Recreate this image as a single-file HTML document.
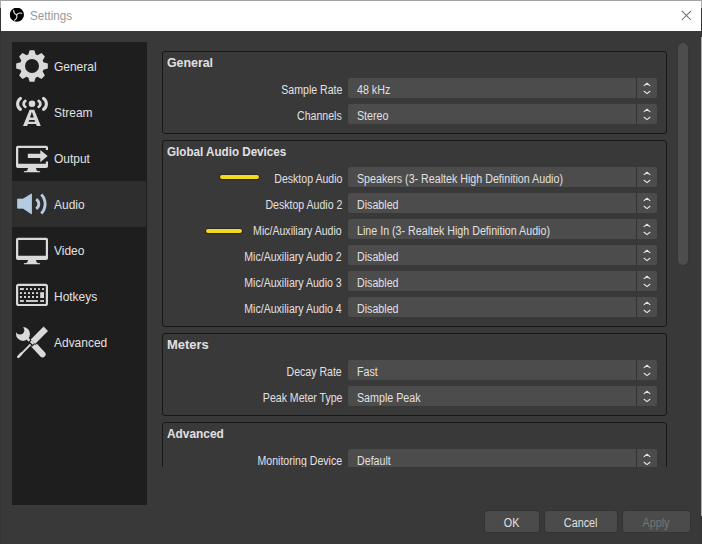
<!DOCTYPE html>
<html><head><meta charset="utf-8">
<style>
*{margin:0;padding:0;box-sizing:border-box;}
html,body{width:702px;height:544px;overflow:hidden;background:#3a393a;}
body{position:relative;font-family:"Liberation Sans",sans-serif;font-size:12px;color:#e1e0e1;}
.abs{position:absolute;}
#bt{left:0;top:0;width:702px;height:1px;background:#a2a2a2;}
#bl{left:0;top:0;width:1px;height:544px;background:#343434;}
#bl2{left:0;top:0;width:1px;height:8px;background:#aaaaaa;}
#br{left:701px;top:0;width:1px;height:544px;background:#343434;}
#br2{left:701px;top:0;width:1px;height:8px;background:#aaaaaa;}
#br3{left:701px;top:37px;width:1px;height:479px;background:#b0b0b0;}
#title{left:1px;top:1px;width:700px;height:30px;background:#fff;}
#title .t{position:absolute;left:29px;top:8px;color:#989898;font-size:12px;transform:scaleX(0.97);transform-origin:0 50%;}
#side{left:12px;top:42px;width:135px;height:463px;background:#1f1e1f;}
.item{position:absolute;left:0;width:135px;height:46px;}
.item.sel{background:#2f2e2f;width:134px;}
.item svg{position:absolute;left:4px;top:7px;}
.item .lb{position:absolute;left:42px;top:16px;font-size:13px;color:#e1e0e1;transform:scaleX(0.92);transform-origin:0 50%;}
.grp{position:absolute;left:162px;width:505px;border:1px solid #171717;border-radius:3px;}
.grp .gt{position:absolute;left:3.5px;top:4px;font-weight:bold;font-size:12px;transform:scaleX(0.98);transform-origin:0 50%;}
.yl{position:absolute;height:4.6px;background:#f4da1e;border-radius:2.3px;box-shadow:0 0 0.8px 0.6px rgba(20,15,0,0.7);}
.lab{position:absolute;right:328px;font-size:12px;white-space:nowrap;transform:scaleX(0.88);transform-origin:100% 50%;margin-top:2px;}
.cb{position:absolute;left:200px;width:309px;height:20px;background:#4c4c4c;border-radius:2px;}
.cb .v{position:absolute;left:8.5px;top:5px;white-space:nowrap;transform:scaleX(0.89);transform-origin:0 50%;}
.cb .sep{position:absolute;left:288px;top:0;width:1px;height:20px;background:#333233;}
.cb svg{position:absolute;left:295px;top:4px;}
#clip{left:148px;top:42px;width:522px;height:425px;overflow:hidden;}
#sbh{left:678px;top:43px;width:10px;height:222px;background:#4d4d4d;border-radius:5px;box-shadow:0 0 0 1px #363636;}
.btn{position:absolute;top:511px;height:21px;background:#4b4b4b;border-radius:3px;box-shadow:0 0 0 1px #333;text-align:center;line-height:21px;}
.btn span{display:inline-block;position:relative;top:1.5px;transform:scaleX(0.9);}

</style></head><body>
<div class="abs" id="title"><svg class="abs" style="left:9px;top:7px" width="15" height="15" viewBox="0 0 15 15"><circle cx="6.9" cy="6.7" r="7.1" fill="#000"/><g stroke="#dcdcdc" stroke-width="1.15" fill="none" stroke-linecap="round"><path d="M3.6 2.3 Q3.6 5.6 6.6 6.8"/><path d="M11.7 5.3 Q8.4 4.2 6.6 6.8"/><path d="M6.6 6.8 Q7.8 10.4 4.5 12.2"/></g></svg><div class="t">Settings</div>
<svg class="abs" style="left:680px;top:9px" width="11" height="11" viewBox="0 0 11 11"><path d="M0.8 0.8 L10 10 M10 0.8 L0.8 10" stroke="#6a6a6a" stroke-width="1.05"/></svg></div>
<div class="abs" id="bt"></div><div class="abs" id="bl"></div><div class="abs" id="bl2"></div><div class="abs" id="br"></div><div class="abs" id="br2"></div><div class="abs" id="br3"></div>
<div class="abs" id="side">
 <div class="item" style="top:1px"><svg width="32" height="32" viewBox="0 0 32 32" overflow="visible"><path fill="#d9d9d9" fill-rule="evenodd" d="M12.30 4.58 L13.60 0.18 L18.40 0.18 L19.70 4.58 A12.0 12.0 0 0 1 21.46 5.31 L25.49 3.12 L28.88 6.51 L26.69 10.54 A12.0 12.0 0 0 1 27.42 12.30 L31.82 13.60 L31.82 18.40 L27.42 19.70 A12.0 12.0 0 0 1 26.69 21.46 L28.88 25.49 L25.49 28.88 L21.46 26.69 A12.0 12.0 0 0 1 19.70 27.42 L18.40 31.82 L13.60 31.82 L12.30 27.42 A12.0 12.0 0 0 1 10.54 26.69 L6.51 28.88 L3.12 25.49 L5.31 21.46 A12.0 12.0 0 0 1 4.58 19.70 L0.18 18.40 L0.18 13.60 L4.58 12.30 A12.0 12.0 0 0 1 5.31 10.54 L3.12 6.51 L6.51 3.12 L10.54 5.31 A12.0 12.0 0 0 1 12.30 4.58 Z M23 16 A7 7 0 1 0 9 16 A7 7 0 1 0 23 16 Z"/></svg><div class="lb">General</div></div>
 <div class="item" style="top:47px"><svg width="32" height="32" viewBox="0 0 32 32" overflow="visible"><g fill="none" stroke="#d9d9d9" stroke-linecap="round"><path stroke-width="3.1" d="M4.46 2.41 A6.7 6.7 0 0 0 4.46 13.39"/><path stroke-width="3.1" d="M27.54 2.41 A6.7 6.7 0 0 1 27.54 13.39"/><path stroke-width="2.8" d="M9.30 4.96 A3.4 3.4 0 0 0 9.30 10.84"/><path stroke-width="2.8" d="M22.70 4.96 A3.4 3.4 0 0 1 22.70 10.84"/></g><circle cx="16" cy="7.8" r="3.3" fill="#d9d9d9"/><path fill="#d9d9d9" fill-rule="evenodd" d="M13.6 13.75 H18.2 L24.8 29.9 H20.8 L20 27.9 H11.9 L11.1 29.9 H7 Z M15.9 15.7 L17.8 21.5 H14 Z M13.3 24.1 H18.5 L19.2 25.7 H12.6 Z"/></svg><div class="lb">Stream</div></div>
 <div class="item" style="top:93px"><svg width="32" height="32" viewBox="0 0 32 32" overflow="visible"><path fill="#d9d9d9" fill-rule="evenodd" d="M1.8 3.7 H30.2 Q32 3.7 32 5.5 V8.1 H29.8 V5.9 H2.25 V21.7 H29.8 V19.5 H32 V24.3 Q32 26.1 30.2 26.1 H1.8 Q0 26.1 0 24.3 V5.5 Q0 3.7 1.8 3.7 Z"/><path fill="#d9d9d9" d="M12 26 H20 L20.6 28.2 Q21.2 29 24 29.3 L24.2 30.3 H7.8 L8 29.3 Q10.8 29 11.4 28.2 Z"/><path fill="#d9d9d9" d="M11.8 11.8 H24.3 V8.1 L31.7 13.9 L24.3 20.3 V15.9 H11.8 Z"/></svg><div class="lb">Output</div></div>
 <div class="item sel" style="top:139px"><svg width="32" height="32" viewBox="0 0 32 32" overflow="visible"><path fill="#b4cce2" stroke="#b4cce2" stroke-width="0.8" stroke-linejoin="round" d="M1.6 11.1 H7 L15.5 5.9 V25.9 L7 20.2 H1.6 Z"/><path fill="none" stroke="#b4cce2" stroke-width="2.9" d="M20.17 11.25 A5.6 5.6 0 0 1 20.17 20.75"/><path fill="none" stroke="#b4cce2" stroke-width="2.9" d="M25.28 6.55 A13.6 13.6 0 0 1 25.28 25.45"/></svg><div class="lb">Audio</div></div>
 <div class="item" style="top:185px"><svg width="32" height="32" viewBox="0 0 32 32" overflow="visible"><path fill="#d9d9d9" fill-rule="evenodd" d="M1.8 3.7 H30.2 Q32 3.7 32 5.5 V24.3 Q32 26.1 30.2 26.1 H1.8 Q0 26.1 0 24.3 V5.5 Q0 3.7 1.8 3.7 Z M2.25 5.9 V21.7 H29.8 V5.9 Z"/><path fill="#d9d9d9" d="M12 26 H20 L20.6 28.2 Q21.2 29 24 29.3 L24.2 30.3 H7.8 L8 29.3 Q10.8 29 11.4 28.2 Z"/></svg><div class="lb">Video</div></div>
 <div class="item" style="top:231px"><svg width="32" height="32" viewBox="0 0 32 32" overflow="visible"><rect x="1.1" y="4.8" width="29.8" height="20.2" rx="1.5" fill="none" stroke="#d9d9d9" stroke-width="2.2"/><g fill="#d9d9d9"><rect x="3.9" y="8.1" width="4" height="1.9"/><rect x="10" y="8.1" width="1.8" height="1.9"/><rect x="14" y="8.1" width="1.9" height="1.9"/><rect x="18.1" y="8.1" width="1.8" height="1.9"/><rect x="22.1" y="8.1" width="1.8" height="1.9"/><rect x="26.1" y="8.1" width="1.9" height="1.9"/><rect x="3.9" y="12.2" width="2" height="1.8"/><rect x="3.9" y="16" width="2" height="1.9"/><rect x="8" y="12.2" width="2" height="1.8"/><rect x="8" y="16" width="2" height="1.9"/><rect x="12" y="12.2" width="2" height="1.8"/><rect x="12" y="16" width="2" height="1.9"/><rect x="16" y="12.2" width="2" height="1.8"/><rect x="16" y="16" width="2" height="1.9"/><rect x="20.1" y="12.2" width="2" height="1.8"/><rect x="20.1" y="16" width="2" height="1.9"/><rect x="24.2" y="12.2" width="3.8" height="5.8"/><rect x="3.9" y="20.1" width="4" height="1.8"/><rect x="10" y="20.1" width="11.9" height="1.8"/><rect x="24.2" y="20.1" width="3.8" height="1.8"/></g></svg><div class="lb">Hotkeys</div></div>
 <div class="item" style="top:277px"><svg width="32" height="32" viewBox="0 0 32 32" overflow="visible"><path stroke="#d9d9d9" stroke-width="6.0" stroke-linecap="round" d="M17.3 18.4 L26.6 28.4"/><path stroke="#d9d9d9" stroke-width="6.0" d="M16.9 18 L17.6 18.7"/><circle cx="7" cy="7.9" r="7.0" fill="#d9d9d9"/><circle cx="4.0" cy="4.2" r="4.3" fill="#1f1e1f"/><path stroke="#d9d9d9" stroke-width="2.6" d="M9 10 L14.6 15.8"/><path stroke="#1f1e1f" stroke-width="4.4" d="M16.4 16.5 L1.9 31.3"/><path stroke="#d9d9d9" stroke-width="1.8" d="M16.4 16.5 L2.6 30.6"/><path stroke="#d9d9d9" stroke-width="2.6" stroke-linecap="round" d="M5.3 27.7 L2.3 30.8"/><path stroke="#1f1e1f" stroke-width="8.4" stroke-linecap="butt" d="M30 2.6 L16.6 16"/><path stroke="#1f1e1f" stroke-width="6.2" stroke-linecap="butt" d="M17 15.6 L14.3 18.3"/><path stroke="#d9d9d9" stroke-width="6.2" stroke-linecap="butt" d="M29.8 2.8 L16.9 15.7"/><path stroke="#d9d9d9" stroke-width="3.8" stroke-linecap="butt" d="M17 15.6 L15.3 17.3"/></svg><div class="lb">Advanced</div></div>
</div>
<div class="abs" id="clip">
 <div class="grp" style="left:14px;top:9px;height:83px"><div class="gt" style="transform:scaleX(1.03)">General</div></div>
 <div class="grp" style="left:14px;top:98px;height:187px"><div class="gt" style="transform:scaleX(0.97)">Global Audio Devices</div></div>
 <div class="grp" style="left:14px;top:291px;height:83px"><div class="gt" style="transform:scaleX(1.08)">Meters</div></div>
 <div class="grp" style="left:14px;top:380px;height:83px"><div class="gt" style="transform:scaleX(0.99)">Advanced</div></div>
<div class="lab" style="top:39px">Sample Rate</div>
<div class="cb" style="top:36px"><div class="v">48 kHz</div><div class="sep"></div><svg width="8" height="13" viewBox="0 0 8 13"><path d="M1.1 3.6 L4 1.3 L6.9 3.6 M1.1 9.3 L4 11.6 L6.9 9.3" stroke="#e6e6e6" stroke-width="1.15" fill="none" stroke-linecap="round" stroke-linejoin="round"/></svg></div>
<div class="lab" style="top:65px">Channels</div>
<div class="cb" style="top:62px"><div class="v">Stereo</div><div class="sep"></div><svg width="8" height="13" viewBox="0 0 8 13"><path d="M1.1 3.6 L4 1.3 L6.9 3.6 M1.1 9.3 L4 11.6 L6.9 9.3" stroke="#e6e6e6" stroke-width="1.15" fill="none" stroke-linecap="round" stroke-linejoin="round"/></svg></div>
<div class="lab" style="top:128px">Desktop Audio</div>
<div class="cb" style="top:125px"><div class="v">Speakers (3- Realtek High Definition Audio)</div><div class="sep"></div><svg width="8" height="13" viewBox="0 0 8 13"><path d="M1.1 3.6 L4 1.3 L6.9 3.6 M1.1 9.3 L4 11.6 L6.9 9.3" stroke="#e6e6e6" stroke-width="1.15" fill="none" stroke-linecap="round" stroke-linejoin="round"/></svg></div>
<div class="lab" style="top:154px">Desktop Audio 2</div>
<div class="cb" style="top:151px"><div class="v">Disabled</div><div class="sep"></div><svg width="8" height="13" viewBox="0 0 8 13"><path d="M1.1 3.6 L4 1.3 L6.9 3.6 M1.1 9.3 L4 11.6 L6.9 9.3" stroke="#e6e6e6" stroke-width="1.15" fill="none" stroke-linecap="round" stroke-linejoin="round"/></svg></div>
<div class="lab" style="top:180px">Mic/Auxiliary Audio</div>
<div class="cb" style="top:177px"><div class="v">Line In (3- Realtek High Definition Audio)</div><div class="sep"></div><svg width="8" height="13" viewBox="0 0 8 13"><path d="M1.1 3.6 L4 1.3 L6.9 3.6 M1.1 9.3 L4 11.6 L6.9 9.3" stroke="#e6e6e6" stroke-width="1.15" fill="none" stroke-linecap="round" stroke-linejoin="round"/></svg></div>
<div class="lab" style="top:206px">Mic/Auxiliary Audio 2</div>
<div class="cb" style="top:203px"><div class="v">Disabled</div><div class="sep"></div><svg width="8" height="13" viewBox="0 0 8 13"><path d="M1.1 3.6 L4 1.3 L6.9 3.6 M1.1 9.3 L4 11.6 L6.9 9.3" stroke="#e6e6e6" stroke-width="1.15" fill="none" stroke-linecap="round" stroke-linejoin="round"/></svg></div>
<div class="lab" style="top:232px">Mic/Auxiliary Audio 3</div>
<div class="cb" style="top:229px"><div class="v">Disabled</div><div class="sep"></div><svg width="8" height="13" viewBox="0 0 8 13"><path d="M1.1 3.6 L4 1.3 L6.9 3.6 M1.1 9.3 L4 11.6 L6.9 9.3" stroke="#e6e6e6" stroke-width="1.15" fill="none" stroke-linecap="round" stroke-linejoin="round"/></svg></div>
<div class="lab" style="top:258px">Mic/Auxiliary Audio 4</div>
<div class="cb" style="top:255px"><div class="v">Disabled</div><div class="sep"></div><svg width="8" height="13" viewBox="0 0 8 13"><path d="M1.1 3.6 L4 1.3 L6.9 3.6 M1.1 9.3 L4 11.6 L6.9 9.3" stroke="#e6e6e6" stroke-width="1.15" fill="none" stroke-linecap="round" stroke-linejoin="round"/></svg></div>
<div class="lab" style="top:321px">Decay Rate</div>
<div class="cb" style="top:318px"><div class="v">Fast</div><div class="sep"></div><svg width="8" height="13" viewBox="0 0 8 13"><path d="M1.1 3.6 L4 1.3 L6.9 3.6 M1.1 9.3 L4 11.6 L6.9 9.3" stroke="#e6e6e6" stroke-width="1.15" fill="none" stroke-linecap="round" stroke-linejoin="round"/></svg></div>
<div class="lab" style="top:347px">Peak Meter Type</div>
<div class="cb" style="top:344px"><div class="v">Sample Peak</div><div class="sep"></div><svg width="8" height="13" viewBox="0 0 8 13"><path d="M1.1 3.6 L4 1.3 L6.9 3.6 M1.1 9.3 L4 11.6 L6.9 9.3" stroke="#e6e6e6" stroke-width="1.15" fill="none" stroke-linecap="round" stroke-linejoin="round"/></svg></div>
<div class="lab" style="top:410px">Monitoring Device</div>
<div class="cb" style="top:407px"><div class="v">Default</div><div class="sep"></div><svg width="8" height="13" viewBox="0 0 8 13"><path d="M1.1 3.6 L4 1.3 L6.9 3.6 M1.1 9.3 L4 11.6 L6.9 9.3" stroke="#e6e6e6" stroke-width="1.15" fill="none" stroke-linecap="round" stroke-linejoin="round"/></svg></div>
</div>
<div class="abs" id="sbh"></div>
<div class="yl" style="left:220px;top:174.8px;width:38.8px"></div>
<div class="yl" style="left:205.8px;top:228.7px;width:36.6px"></div>
<div class="btn" style="left:485px;width:54px"><span>OK</span></div>
<div class="btn" style="left:545px;width:72px"><span>Cancel</span></div>
<div class="btn" style="left:623px;width:67px;color:#767676"><span>Apply</span></div>
</body></html>
